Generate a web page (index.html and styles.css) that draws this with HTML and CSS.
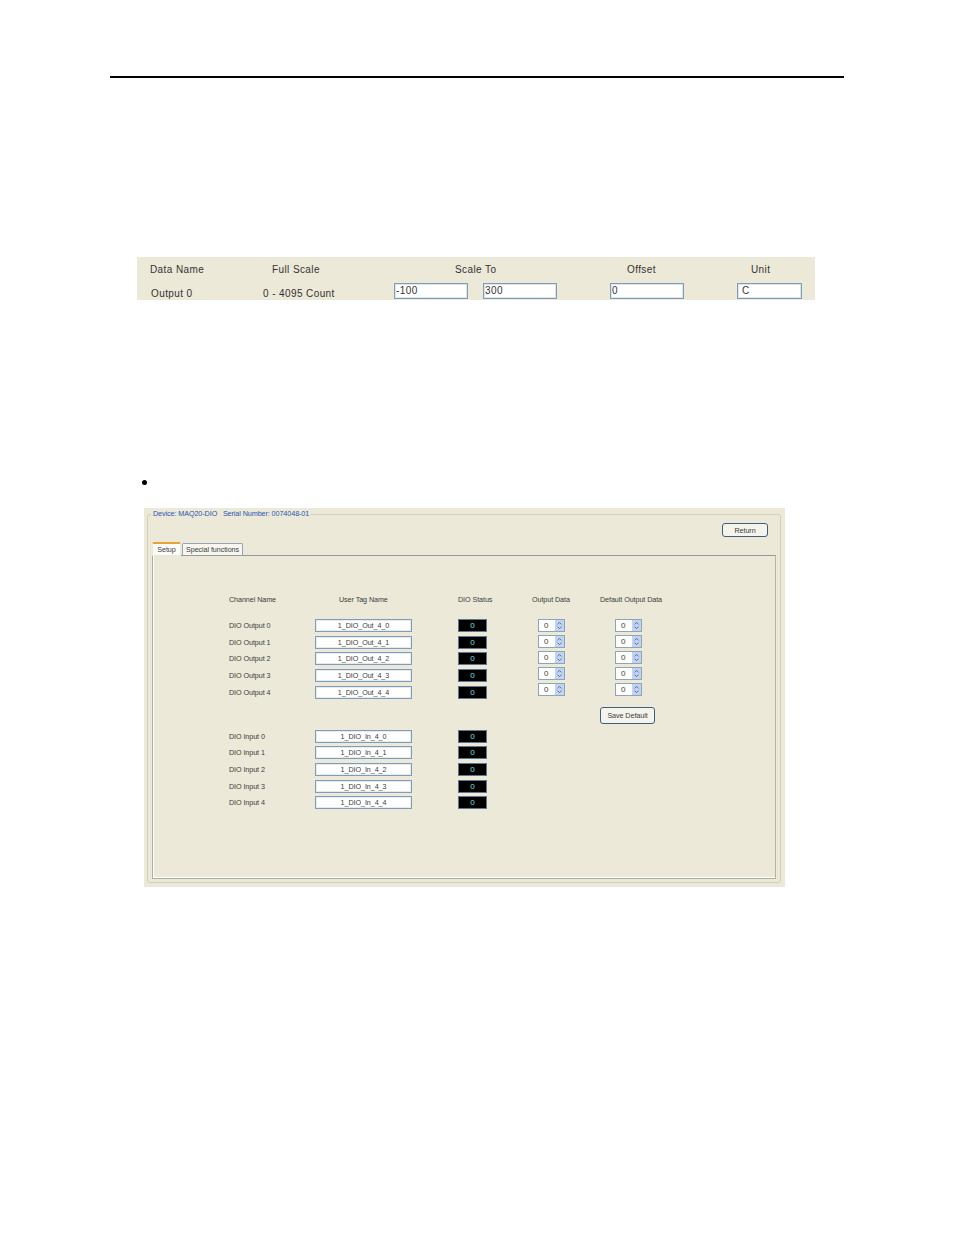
FILE: index.html
```html
<!DOCTYPE html>
<html lang="en">
<head>
    <meta charset="UTF-8">
    <title>MAQ20-DIO Setup</title>
    <link rel="stylesheet" href="styles.css">
</head>
<body>
    <div class="page">
        <hr class="top-rule">

        <div class="scale-table">
            <div class="scale-head head-name">Data Name</div>
            <div class="scale-head head-full">Full Scale</div>
            <div class="scale-head head-to">Scale To</div>
            <div class="scale-head head-offset">Offset</div>
            <div class="scale-head head-unit">Unit</div>

            <div class="scale-label label-name">Output 0</div>
            <div class="scale-label">0 - 4095 Count</div>
            <div class="scale-input input-a">-100</div>
            <div class="scale-input input-b">300</div>
            <div class="scale-input input-c">0</div>
            <div class="scale-input input-d">C</div>
        </div>

        <div class="bullet"></div>

        <div class="window">
            <fieldset class="group">
                <legend>Device: MAQ20-DIO &nbsp; Serial Number: 0074048-01</legend>
                <div class="return-row">
                    <button class="xp-button return-button">Return</button>
                </div>

                <div class="tabs">
                    <div class="tab tab-active">Setup</div>
                    <div class="tab">Special functions</div>
                </div>

                <div class="tab-panel">
                    <div class="column col-names">
                        <div class="col-title">Channel Name</div>
                        <div class="stack">
                            <div class="cell">DIO Output 0</div>
                            <div class="cell">DIO Output 1</div>
                            <div class="cell">DIO Output 2</div>
                            <div class="cell">DIO Output 3</div>
                            <div class="cell">DIO Output 4</div>
                        </div>
                        <div class="stack stack-inputs">
                            <div class="cell">DIO Input 0</div>
                            <div class="cell">DIO Input 1</div>
                            <div class="cell">DIO Input 2</div>
                            <div class="cell">DIO Input 3</div>
                            <div class="cell">DIO Input 4</div>
                        </div>
                    </div>

                    <div class="column col-tags">
                        <div class="col-title">User Tag Name</div>
                        <div class="stack">
                            <div class="cell tag">1_DIO_Out_4_0</div>
                            <div class="cell tag">1_DIO_Out_4_1</div>
                            <div class="cell tag">1_DIO_Out_4_2</div>
                            <div class="cell tag">1_DIO_Out_4_3</div>
                            <div class="cell tag">1_DIO_Out_4_4</div>
                        </div>
                        <div class="stack stack-inputs">
                            <div class="cell tag">1_DIO_In_4_0</div>
                            <div class="cell tag">1_DIO_In_4_1</div>
                            <div class="cell tag">1_DIO_In_4_2</div>
                            <div class="cell tag">1_DIO_In_4_3</div>
                            <div class="cell tag">1_DIO_In_4_4</div>
                        </div>
                    </div>

                    <div class="column col-status">
                        <div class="col-title">DIO Status</div>
                        <div class="stack">
                            <div class="cell status">0</div>
                            <div class="cell status">0</div>
                            <div class="cell status">0</div>
                            <div class="cell status">0</div>
                            <div class="cell status">0</div>
                        </div>
                        <div class="stack stack-inputs">
                            <div class="cell status">0</div>
                            <div class="cell status">0</div>
                            <div class="cell status">0</div>
                            <div class="cell status">0</div>
                            <div class="cell status">0</div>
                        </div>
                    </div>

                    <div class="column col-output">
                        <div class="col-title output-title">Output Data</div>
                        <div class="stack spin-stack" id="outputSpins"></div>
                    </div>

                    <div class="column col-default">
                        <div class="col-title">Default Output Data</div>
                        <div class="stack spin-stack" id="defaultSpins"></div>
                        <button class="xp-button save-button">Save Default</button>
                    </div>
                </div>
            </fieldset>
        </div>
    </div>

    <script>
        const spinHtml = `
            <div class="spin">
                <span class="spin-value">0</span>
                <span class="spin-buttons">
                    <svg width="9" height="11" viewBox="0 0 9 11">
                        <rect width="9" height="11" fill="#c1d3f2"/>
                        <path d="M2.5 4.4 L4.5 2.4 L6.5 4.4 M2.5 6.6 L4.5 8.6 L6.5 6.6" fill="none" stroke="#5a6e92" stroke-width="1"/>
                    </svg>
                </span>
            </div>`;
        document.getElementById('outputSpins').innerHTML = spinHtml.repeat(5);
        document.getElementById('defaultSpins').innerHTML = spinHtml.repeat(5);
    </script>
</body>
</html>
```

FILE: styles.css
```css
* {
    box-sizing: border-box;
}
body {
    margin: 0;
    background-color: #fff;
    font-family: "Liberation Sans", Arial, sans-serif;
    color: #333;
}
.page {
    width: 954px;
    height: 1235px;
    padding: 76px 110px 0;
}
.top-rule {
    height: 2px;
    margin: 0;
    border: none;
    background-color: #000;
}

/* scaling table */
.scale-table {
    display: grid;
    grid-template-columns: 113px 131px 74px 15px 74px 53px 74px 53px 65px;
    grid-template-rows: 26px 17px;
    width: 678px;
    height: 43px;
    margin: 179px 0 0 27px;
    padding-left: 13px;
    overflow: hidden;
    background-color: #ece9d8;
    font-size: 10px;
    letter-spacing: 0.4px;
}
.scale-head {
    padding-top: 7px;
    line-height: 12px;
}
.head-full {
    padding-left: 9px;
}
.head-to {
    grid-column: 3 / 6;
    padding-left: 61px;
}
.head-offset {
    grid-column: 7;
    padding-left: 17px;
}
.head-unit {
    grid-column: 9;
    padding-left: 14px;
}
.scale-label {
    grid-row: 2;
    padding-top: 5px;
    line-height: 12px;
}
.label-name {
    padding-left: 1px;
}
.scale-input {
    grid-row: 2;
    height: 16px;
    padding-left: 1px;
    background-color: #fff;
    border: 1px solid #7f9db9;
    box-shadow: inset 0 0 0 1px #dde5ec;
    line-height: 13px;
}
.input-a { grid-column: 3; }
.input-b { grid-column: 5; }
.input-c { grid-column: 7; }
.input-d { grid-column: 9; padding-left: 4px; }

.bullet {
    width: 5px;
    height: 5px;
    margin: 180px 0 0 32px;
    border-radius: 50%;
    background-color: #000;
}

/* application window */
.window {
    width: 641px;
    height: 379px;
    margin: 23px 0 0 34px;
    padding: 0 4px 4px 3px;
    background-color: #ece9d8;
    font-size: 7.2px;
    letter-spacing: -0.08px;
    color: #3c3c3c;
}
.group {
    height: 375px;
    margin: 0;
    padding: 0 4px 4px 4px;
    border: 1px solid #d0d0bf;
    border-radius: 3px;
}
.group legend {
    margin-left: -1px;
    padding: 0 2px;
    color: #1f55b5;
    line-height: 12px;
}
.return-row {
    display: flex;
    justify-content: flex-end;
    height: 17px;
    padding: 3px 8px 0 0;
}
.xp-button {
    padding: 0;
    background-color: #f4f3ec;
    border: 1px solid #3c5f80;
    border-radius: 3px;
    font-family: inherit;
    font-size: inherit;
    letter-spacing: inherit;
    color: inherit;
}
.return-button {
    width: 46px;
    height: 14px;
}

.tabs {
    display: flex;
    align-items: flex-end;
    height: 18px;
}
.tab {
    height: 12px;
    margin-left: 1px;
    padding: 0 3px;
    background-color: #f7f6ef;
    border: 1px solid #91a7b4;
    border-bottom: none;
    border-radius: 2px 2px 0 0;
    line-height: 11px;
}
.tab-active {
    position: relative;
    z-index: 1;
    width: 29px;
    height: 14px;
    margin: 0 0 -1px;
    padding: 0;
    background-color: #fcfcfa;
    border: 1px solid #e8e8dc;
    border-top: 2px solid #e8a23a;
    text-align: center;
}

.tab-panel {
    display: flex;
    height: 324px;
    padding: 39px 0 0 76px;
    border: 1px solid #919b9c;
    border-left-color: #a9ada2;
    border-bottom-color: #a9ada2;
    border-right-color: #b5b5a6;
    box-shadow: inset 1px 0 #fff, inset 0 -1px #fff;
}
.column {
    display: flex;
    flex-direction: column;
}
.col-title {
    height: 24px;
    line-height: 10px;
    white-space: nowrap;
}
.stack {
    display: flex;
    flex-direction: column;
    gap: 3.67px;
}
.stack-inputs {
    margin-top: 31px;
}
.cell {
    height: 13px;
    line-height: 13px;
    white-space: nowrap;
}
.col-names {
    width: 86px;
}
.col-tags {
    width: 143px;
}
.col-tags .col-title {
    padding-left: 24px;
}
.tag {
    width: 97px;
    background-color: #fff;
    border: 1px solid #7f9db9;
    box-shadow: inset 0 0 0 1px #e6ebf0;
    line-height: 11px;
    text-align: center;
}
.col-status {
    width: 80px;
}
.status {
    width: 29px;
    background-color: #000;
    border: 1px solid #5a7890;
    color: #7fe0e0;
    font-size: 8px;
    line-height: 11px;
    text-align: center;
}
.col-output {
    width: 77px;
}
.output-title {
    margin-left: -6px;
}
.spin-stack {
    gap: 3px;
}
.spin {
    display: flex;
    align-items: center;
    justify-content: space-between;
    width: 27px;
    height: 13px;
    padding-left: 5px;
    background-color: #fff;
    border: 1px solid #8ea4b8;
}
.spin-value {
    font-size: 8px;
    line-height: 11px;
}
.spin-buttons {
    display: flex;
}
.col-default {
    width: 80px;
    margin-left: -15px;
}
.col-default .spin {
    margin-left: 15px;
}
.save-button {
    width: 55px;
    height: 17px;
    margin-top: 11px;
}
```
